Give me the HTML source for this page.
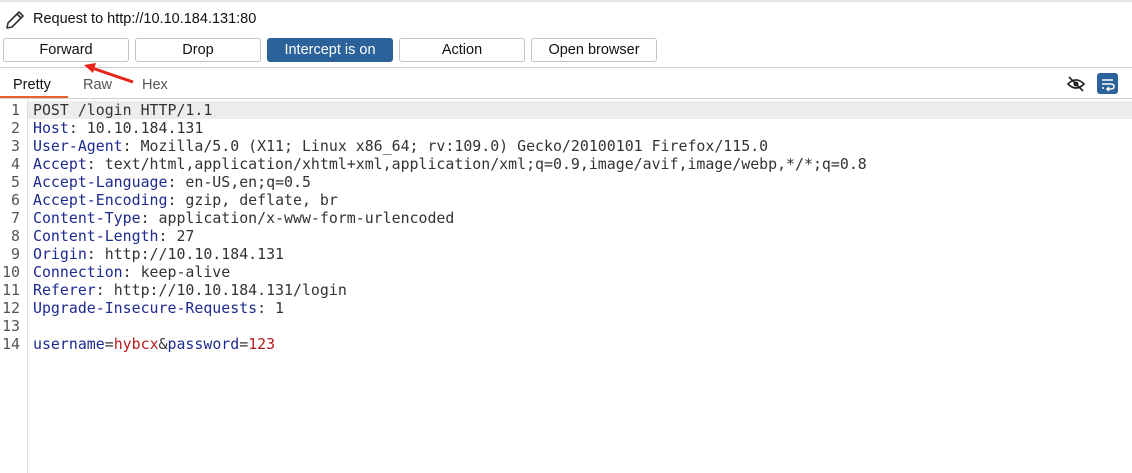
<!DOCTYPE html><html><head><style>
body{margin:0;width:1132px;height:473px;background:#fff;font-family:"Liberation Sans","DejaVu Sans",sans-serif;position:relative;overflow:hidden}
.a{position:absolute}
.btn{position:absolute;top:38px;border:1px solid #c4c4c4;border-radius:3px;background:#fff;font-size:14.5px;text-align:center;line-height:22px;color:#111;box-sizing:border-box;width:126px;height:24px}
.code{position:absolute;left:33px;top:101px;font-family:"DejaVu Sans Mono","Liberation Mono",monospace;font-size:14.9px;line-height:18px;white-space:pre;color:#333}
.ln{position:absolute;left:0;width:20px;top:101px;text-align:right;font-family:"DejaVu Sans Mono",monospace;font-size:14.9px;line-height:18px;color:#555;white-space:pre}
.k{color:#1d2a8f}.v{color:#b71c1c}
</style></head><body>
<div class="a" style="left:0;top:0;width:1132px;height:2px;background:#e6e6e6"></div>
<svg class="a" style="left:4px;top:9px" width="22" height="22" viewBox="0 0 22 22"><path d="M3 19 L4 14 L15 3 L19 7 L8 18 Z M13 5 L17 9" fill="none" stroke="#333" stroke-width="1.6" stroke-linejoin="round"/></svg>
<div class="a" style="left:33px;top:11px;font-size:14.5px;color:#111">Request to http://10.10.184.131:80</div>
<div class="btn" style="left:3px">Forward</div>
<div class="btn" style="left:135px">Drop</div>
<div class="btn" style="left:267px;background:#2b6299;color:#fff;border-color:#2b6299">Intercept is on</div>
<div class="btn" style="left:399px">Action</div>
<div class="btn" style="left:531px">Open browser</div>
<div class="a" style="left:0;top:67px;width:1132px;height:1px;background:#d0d0d0"></div>
<svg class="a" style="left:80px;top:60px" width="60" height="30"><line x1="53" y1="22" x2="12" y2="8" stroke="#e8231b" stroke-width="3"/><polygon points="4,5 16,3 13,13" fill="#e8231b"/></svg>
<div class="a" style="left:13px;top:77px;font-size:14.5px;color:#111">Pretty</div>
<div class="a" style="left:83px;top:77px;font-size:14.5px;color:#555">Raw</div>
<div class="a" style="left:142px;top:77px;font-size:14.5px;color:#555">Hex</div>
<div class="a" style="left:0;top:96px;width:68px;height:2px;background:#e8622c"></div>
<div class="a" style="left:0;top:98px;width:1132px;height:1px;background:#d0d0d0"></div>
<svg class="a" style="left:1066px;top:74px" width="20" height="20" viewBox="0 0 20 20"><path d="M2 10 Q10 2 18 10 Q10 18 2 10 Z" fill="none" stroke="#222" stroke-width="1.6"/><circle cx="10" cy="10" r="2.5" fill="#222"/><line x1="3" y1="3" x2="17" y2="17" stroke="#222" stroke-width="1.6"/></svg>
<div class="a" style="left:1097px;top:73px;width:21px;height:21px;border-radius:3px;background:#2b6299"></div>
<svg class="a" style="left:1097px;top:73px" width="21" height="21"><path d="M5 7 H16 M5 11 H14 Q17 11 17 13.5 Q17 16 14 16 H10 M5 15 H7 M12 14 L10 16 L12 18" fill="none" stroke="#fff" stroke-width="1.5"/></svg>
<div class="a" style="left:28px;top:101px;width:1104px;height:18px;background:#ededed"></div>
<div class="a" style="left:27px;top:99px;width:1px;height:374px;background:#ddd"></div>
<div class="ln">1
2
3
4
5
6
7
8
9
10
11
12
13
14</div>
<div class="code">POST /login HTTP/1.1
<span class="k">Host</span>: 10.10.184.131
<span class="k">User-Agent</span>: Mozilla/5.0 (X11; Linux x86_64; rv:109.0) Gecko/20100101 Firefox/115.0
<span class="k">Accept</span>: text/html,application/xhtml+xml,application/xml;q=0.9,image/avif,image/webp,*/*;q=0.8
<span class="k">Accept-Language</span>: en-US,en;q=0.5
<span class="k">Accept-Encoding</span>: gzip, deflate, br
<span class="k">Content-Type</span>: application/x-www-form-urlencoded
<span class="k">Content-Length</span>: 27
<span class="k">Origin</span>: http://10.10.184.131
<span class="k">Connection</span>: keep-alive
<span class="k">Referer</span>: http://10.10.184.131/login
<span class="k">Upgrade-Insecure-Requests</span>: 1

<span class="k">username</span>=<span class="v">hybcx</span>&amp;<span class="k">password</span>=<span class="v">123</span></div>
</body></html>
